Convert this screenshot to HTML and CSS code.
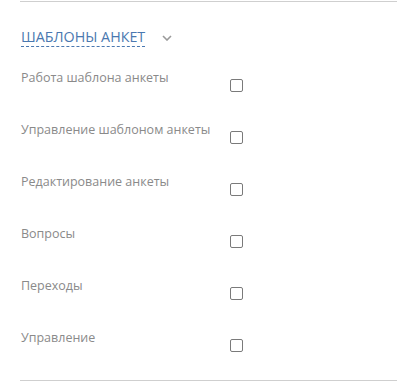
FILE: index.html
```html
<!DOCTYPE html>
<html lang="ru">
<head>
    <meta charset="UTF-8">
    <title>Шаблоны анкет</title>
    <link rel="stylesheet" href="styles.css">
</head>
<body>
<div class="section">
    <div class="section-head">
        <span class="section-title">ШАБЛОНЫ АНКЕТ</span>
        <svg class="chevron" width="10" height="6" viewBox="0 0 10 6"><path d="M1 1l4 4 4-4" fill="none" stroke="#9a9a9a" stroke-width="1.6"/></svg>
    </div>

    <div class="rights">
        <div class="row"><span class="row-label">Работа шаблона анкеты</span><span class="check"></span></div>
        <div class="row"><span class="row-label">Управление шаблоном анкеты</span><span class="check"></span></div>
        <div class="row"><span class="row-label">Редактирование анкеты</span><span class="check"></span></div>
        <div class="row"><span class="row-label">Вопросы</span><span class="check"></span></div>
        <div class="row"><span class="row-label">Переходы</span><span class="check"></span></div>
        <div class="row"><span class="row-label">Управление</span><span class="check"></span></div>
    </div>
</div>
</body>
</html>
```

FILE: styles.css
```css
body {
    margin: 0;
    padding-top: 1px;
    font-family: "Open Sans", "Noto Sans", sans-serif;
    background: #fff;
}
.section {
    margin-left: 20px;
    border-top: 1px solid #cfcfcf;
    border-bottom: 1px solid #cfcfcf;
    height: 380px;
    box-sizing: border-box;
}
.section-head { display: flex; align-items: center; padding: 26px 0 0 1px; }
.section-title {
    font-size: 14.3px;
    line-height: 18px;
    color: #4a78b0;
    border-bottom: 1px dashed #4a78b0;
}
.chevron { margin-left: 17px; }

.rights { padding-top: 23px; padding-left: 1px; }
.row { display: flex; height: 52px; }
.row-label {
    width: 209px;
    font-size: 12.5px;
    line-height: 16px;
    color: #8a8a8a;
}
.check {
    width: 11px;
    height: 11px;
    margin-top: 9px;
    border: 1px solid #7a7a7a;
    border-radius: 2px;
}
```
